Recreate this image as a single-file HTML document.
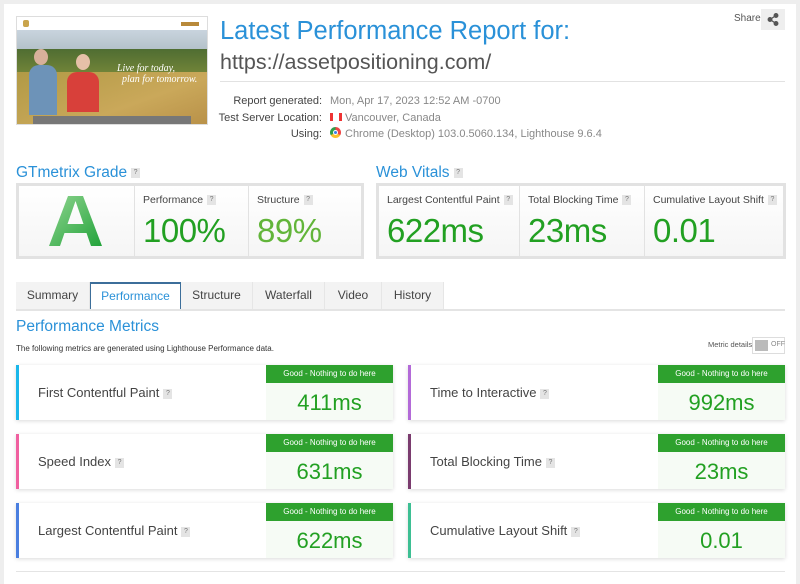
<!DOCTYPE html>
<html><head><meta charset="utf-8"><style>
*{margin:0;padding:0;box-sizing:border-box}
body{width:800px;height:575px;background:#eeeeee;font-family:"Liberation Sans",sans-serif;position:relative;overflow:hidden;color:#444}
.p{position:absolute}
.panel{left:4px;top:4px;width:792px;height:580px;background:#fff}
.blue{color:#2a91d8}
.q{display:inline-block;width:9px;height:10px;background:#e4e4e4;color:#777;font-size:7px;line-height:10px;text-align:center;vertical-align:middle;margin-left:4px}
.box{border:3px solid #e2e2e2;background:linear-gradient(#fff,#f5f5f5);display:flex}
.cell{border-right:1px solid #e2e2e2;padding:8px 0 0 8px;position:relative;white-space:nowrap}
.cell:last-child{border-right:0}
.lab{font-size:10.5px;color:#444}
.big{font-size:33px;color:#22a022;margin-top:6px;letter-spacing:-0.5px}
.tab{position:absolute;top:282px;height:27px;background:#f3f3f3;font-size:12px;color:#444;text-align:center;line-height:27px;border-right:1px solid #e6e6e6}
.card{position:absolute;width:377px;height:55px;background:#fff;box-shadow:0 1px 4px rgba(0,0,0,.15)}
.card .bar{position:absolute;left:0;top:0;width:3px;height:55px}
.card .nm{position:absolute;left:22px;top:20px;font-size:13px;color:#444}
.card .gd{position:absolute;right:0;top:0;width:127px;height:55px;background:#f6fbf5}
.card .gh{height:18px;background:#2ea12e;color:#fff;font-size:8px;text-align:center;line-height:18px}
.card .gv{text-align:center;font-size:22px;color:#22a022;margin-top:7px}
.info{font-size:11px;line-height:16.5px}
</style></head><body>
<div class="p panel"></div>
<!-- thumbnail -->
<div class="p" style="left:16px;top:16px;width:192px;height:109px;border:1px solid #ddd;overflow:hidden;background:#fff">
 <div class="p" style="left:0;top:0;width:192px;height:13px;background:#fff"></div>
 <div class="p" style="left:6px;top:3px;width:6px;height:7px;background:#c9a44c;border-radius:2px"></div>
 <div class="p" style="left:164px;top:5px;width:18px;height:4px;background:#b8893a"></div>
 <div class="p" style="left:0;top:13px;width:192px;height:30px;background:linear-gradient(#c9d4de,#a9b7bd)"></div>
 <div class="p" style="left:0;top:32px;width:192px;height:30px;background:linear-gradient(#4f6d32,#7a8a3a)"></div>
 <div class="p" style="left:0;top:55px;width:192px;height:54px;background:linear-gradient(160deg,#b19a45,#caa85a 60%,#b89048)"></div>
 <div class="p" style="left:12px;top:48px;width:28px;height:50px;background:#6d93b8;border-radius:10px 10px 0 0"></div>
 <div class="p" style="left:17px;top:32px;width:14px;height:16px;background:#d8b09a;border-radius:50%"></div>
 <div class="p" style="left:50px;top:55px;width:32px;height:40px;background:#d8403a;border-radius:10px 10px 0 0"></div>
 <div class="p" style="left:59px;top:37px;width:14px;height:16px;background:#e6c0a8;border-radius:50%"></div>
 <div class="p" style="left:100px;top:46px;color:#fff;font-family:'Liberation Serif',serif;font-style:italic;font-size:10px;line-height:11px">Live for today,<br>&nbsp;&nbsp;plan for tomorrow.</div>
 <div class="p" style="left:16px;top:99px;width:158px;height:10px;background:#777"></div>
</div>
<!-- header -->
<div class="p blue" style="left:220px;top:17px;font-size:25.5px">Latest Performance Report for:</div>
<div class="p" style="left:220px;top:50px;font-size:21.5px;color:#555">https://assetpositioning.com/</div>
<div class="p" style="left:220px;top:81px;width:565px;height:1px;background:#e2e2e2"></div>
<div class="p info" style="left:180px;top:93px;width:142px;text-align:right;color:#444">Report generated:<br>Test Server Location:<br>Using:</div>
<div class="p info" style="left:330px;top:93px;color:#888">Mon, Apr 17, 2023 12:52 AM -0700<br><span style="display:inline-block;width:12px;height:8px;background:linear-gradient(90deg,#e33 0 3px,#fff 3px 9px,#e33 9px);margin-right:3px"></span>Vancouver, Canada<br><span style="display:inline-block;width:11px;height:11px;border-radius:50%;background:conic-gradient(#e44 0 120deg,#fbc02d 120deg 240deg,#2e9e48 240deg);vertical-align:-1px;margin-right:4px;position:relative"><span style="position:absolute;left:3px;top:3px;width:5px;height:5px;border-radius:50%;background:#3a7ee6;border:1px solid #fff"></span></span>Chrome (Desktop) 103.0.5060.134, Lighthouse 9.6.4</div>
<div class="p" style="left:734px;top:13px;font-size:10px;color:#555">Share</div>
<div class="p" style="left:761px;top:9px;width:24px;height:21px;background:#eee">
 <svg width="24" height="21" viewBox="0 0 24 21"><g fill="#555" stroke="#555" stroke-width="1.3"><circle cx="15" cy="6.5" r="1.8"/><circle cx="9" cy="10.5" r="1.8"/><circle cx="15" cy="14.5" r="1.8"/><path d="M15 6.5L9 10.5L15 14.5" fill="none"/></g></svg>
</div>
<!-- grade -->
<div class="p blue" style="left:16px;top:164px;font-size:15.5px">GTmetrix Grade<span class="q">?</span></div>
<div class="p box" style="left:16px;top:183px;width:348px;height:76px">
 <div class="cell" style="width:116px;padding:0">
  <svg width="116" height="70" viewBox="0 0 116 70" style="position:absolute;left:0;top:0"><defs><linearGradient id="g" x1="0" y1="0" x2="1" y2="1"><stop offset="0" stop-color="#8fd48f"/><stop offset="1" stop-color="#22a33a"/></linearGradient></defs><path d="M49 10H64L83 60H72L67.5 47H45.5L41 60H30ZM48.5 38H64.5L56.5 15Z" fill="url(#g)"/></svg>
 </div>
 <div class="cell" style="width:114px"><div class="lab">Performance<span class="q">?</span></div><div class="big">100%</div></div>
 <div class="cell" style="width:112px"><div class="lab">Structure<span class="q">?</span></div><div class="big" style="color:#62b53a">89%</div></div>
</div>
<!-- web vitals -->
<div class="p blue" style="left:376px;top:164px;font-size:15.5px">Web Vitals<span class="q">?</span></div>
<div class="p box" style="left:376px;top:183px;width:410px;height:76px">
 <div class="cell" style="width:141px"><div class="lab">Largest Contentful Paint<span class="q">?</span></div><div class="big">622ms</div></div>
 <div class="cell" style="width:125px"><div class="lab">Total Blocking Time<span class="q">?</span></div><div class="big">23ms</div></div>
 <div class="cell" style="width:138px"><div class="lab">Cumulative Layout Shift<span class="q">?</span></div><div class="big">0.01</div></div>
</div>
<!-- tabs -->
<div class="tab" style="left:16px;width:74px">Summary</div>
<div class="tab" style="left:90px;width:91px;background:#fff;border:1px solid #3c6e9a;border-top:2px solid #3c6e9a;color:#2a91d8;height:28px;line-height:25px">Performance</div>
<div class="tab" style="left:181px;width:72px">Structure</div>
<div class="tab" style="left:253px;width:72px">Waterfall</div>
<div class="tab" style="left:325px;width:57px">Video</div>
<div class="tab" style="left:382px;width:62px">History</div>
<div class="p" style="left:16px;top:309px;width:769px;height:2px;background:#e4e4e4"></div>
<div class="p blue" style="left:16px;top:318px;font-size:15.5px">Performance Metrics</div>
<div class="p" style="left:16px;top:344px;font-size:8px;color:#333">The following metrics are generated using Lighthouse Performance data.</div>
<div class="p" style="left:708px;top:340px;font-size:7.5px;color:#555">Metric details</div>
<div class="p" style="left:752px;top:337px;width:33px;height:17px;border:1px solid #ddd;background:#fff"><div style="position:absolute;left:2px;top:2px;width:13px;height:11px;background:#bbb"></div><div style="position:absolute;left:18px;top:3px;font-size:7px;color:#888">OFF</div></div>
<!-- cards -->
<div class="card" style="left:16px;top:365px"><div class="bar" style="background:#1ab7ea"></div><div class="nm">First Contentful Paint<span class="q">?</span></div><div class="gd"><div class="gh">Good - Nothing to do here</div><div class="gv">411ms</div></div></div>
<div class="card" style="left:408px;top:365px"><div class="bar" style="background:#b36ad8"></div><div class="nm">Time to Interactive<span class="q">?</span></div><div class="gd"><div class="gh">Good - Nothing to do here</div><div class="gv">992ms</div></div></div>
<div class="card" style="left:16px;top:434px"><div class="bar" style="background:#f060a0"></div><div class="nm">Speed Index<span class="q">?</span></div><div class="gd"><div class="gh">Good - Nothing to do here</div><div class="gv">631ms</div></div></div>
<div class="card" style="left:408px;top:434px"><div class="bar" style="background:#7a3b6e"></div><div class="nm">Total Blocking Time<span class="q">?</span></div><div class="gd"><div class="gh">Good - Nothing to do here</div><div class="gv">23ms</div></div></div>
<div class="card" style="left:16px;top:503px"><div class="bar" style="background:#4a7fe0"></div><div class="nm">Largest Contentful Paint<span class="q">?</span></div><div class="gd"><div class="gh">Good - Nothing to do here</div><div class="gv">622ms</div></div></div>
<div class="card" style="left:408px;top:503px"><div class="bar" style="background:#3dbf93"></div><div class="nm">Cumulative Layout Shift<span class="q">?</span></div><div class="gd"><div class="gh">Good - Nothing to do here</div><div class="gv">0.01</div></div></div>
<div class="p" style="left:16px;top:571px;width:769px;height:1px;background:#e4e4e4"></div>
</body></html>
